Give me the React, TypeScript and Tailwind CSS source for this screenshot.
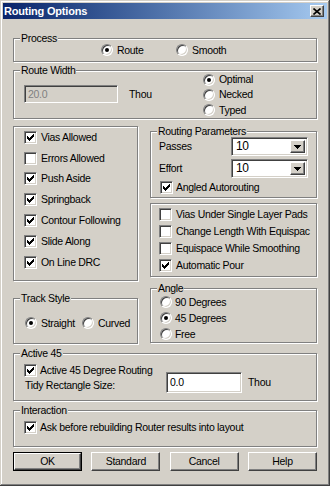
import React from "react";

const sunken =
  "border border-t-[#808080] border-l-[#808080] border-b-white border-r-white shadow-[inset_1px_1px_0_#404040,inset_-1px_-1px_0_#d4d0c8]";
const raised =
  "border border-t-white border-l-white border-b-[#404040] border-r-[#404040] shadow-[inset_-1px_-1px_0_#808080,inset_1px_1px_0_#d4d0c8]";

function Group({
  label,
  className,
  children,
}: {
  label?: string;
  className: string;
  children?: React.ReactNode;
}) {
  return (
    <div
      className={
        "relative border border-[#808080] shadow-[1px_1px_0_#fff,inset_1px_1px_0_#fff] " +
        className
      }
    >
      {label && (
        <span className="absolute left-[6px] top-[-7px] bg-[#d4d0c8] px-[1px] leading-[12px] whitespace-nowrap">
          {label}
        </span>
      )}
      {children}
    </div>
  );
}

function Check({ on }: { on?: boolean }) {
  return (
    <div className={"w-[13px] h-[13px] bg-white shrink-0 flex items-center justify-center " + sunken}>
      {on && (
        <svg width="7" height="7" viewBox="0 0 7 7" shapeRendering="crispEdges">
          <rect x="6" y="0" width="1" height="1" fill="#000" />
          <rect x="5" y="1" width="2" height="1" fill="#000" />
          <rect x="0" y="2" width="1" height="1" fill="#000" />
          <rect x="4" y="2" width="3" height="1" fill="#000" />
          <rect x="0" y="3" width="2" height="1" fill="#000" />
          <rect x="3" y="3" width="3" height="1" fill="#000" />
          <rect x="0" y="4" width="5" height="1" fill="#000" />
          <rect x="1" y="5" width="3" height="1" fill="#000" />
          <rect x="2" y="6" width="1" height="1" fill="#000" />
        </svg>
      )}
    </div>
  );
}

function Radio({ on }: { on?: boolean }) {
  return (
    <div className="w-[12px] h-[12px] rounded-full bg-white shrink-0 flex items-center justify-center border border-t-[#808080] border-l-[#808080] border-b-white border-r-white shadow-[inset_1px_1px_0_#404040,inset_-1px_-1px_0_#d4d0c8]">
      {on && <div className="w-[4px] h-[4px] rounded-full bg-black" />}
    </div>
  );
}

function CheckRow({ on, label, gap }: { on?: boolean; label: string; gap: string }) {
  return (
    <div className={"flex items-center whitespace-nowrap " + gap}>
      <Check on={on} />
      <span>{label}</span>
    </div>
  );
}

function RadioRow({ on, label }: { on?: boolean; label: string }) {
  return (
    <div className="flex items-center gap-[4px] whitespace-nowrap">
      <Radio on={on} />
      <span>{label}</span>
    </div>
  );
}

function Combo({ value }: { value: string }) {
  return (
    <div className={"w-[77px] h-[19px] bg-white flex items-stretch p-[2px] " + sunken}>
      <div className="flex-1 flex items-center pl-[2px] text-[12px]">{value}</div>
      <div className={"w-[15px] bg-[#d4d0c8] flex items-center justify-center " + raised}>
        <svg width="7" height="4" viewBox="0 0 7 4" shapeRendering="crispEdges">
          <path d="M0 0H7L3.5 4Z" fill="#000" />
        </svg>
      </div>
    </div>
  );
}

function Button({ label, def }: { label: string; def?: boolean }) {
  if (def) {
    return (
      <div className="w-[69px] h-[19px] border border-black flex">
        <div className={"flex-1 flex items-center justify-center bg-[#d4d0c8] " + raised}>{label}</div>
      </div>
    );
  }
  return (
    <div className={"w-[69px] h-[19px] flex items-center justify-center bg-[#d4d0c8] " + raised}>
      {label}
    </div>
  );
}

export default function App() {
  return (
    <div
      className="w-[330px] h-[486px] bg-[#d4d0c8] p-[3px] flex flex-col text-black text-[10.5px] tracking-[-0.3px] leading-[13px] shadow-[inset_-1px_-1px_0_#404040,inset_1px_1px_0_#d4d0c8,inset_-2px_-2px_0_#808080,inset_2px_2px_0_#fff]"
      style={{ fontFamily: '"Liberation Sans", Arial, sans-serif' }}
    >
      {/* Title bar */}
      <div className="h-[16px] shrink-0 flex items-center justify-between bg-gradient-to-r from-[#0a246a] to-[#a6caf0]">
        <span className="pl-[1px] text-white font-bold text-[11px] tracking-[-0.2px]">Routing Options</span>
        <div className={"w-[14px] h-[12px] mr-[3px] bg-[#d4d0c8] flex items-center justify-center " + raised}>
          <svg width="8" height="7" viewBox="0 0 8 7">
            <path d="M0.5 0.5L7.5 6.5M7.5 0.5L0.5 6.5" stroke="#000" strokeWidth="1.6" />
          </svg>
        </div>
      </div>

      <div className="flex flex-col px-[10px]">
        {/* Process */}
        <Group label="Process" className="mt-[19px] h-[24px] flex items-center pl-[87px]">
          <div className="w-[75px]">
            <RadioRow on label="Route" />
          </div>
          <RadioRow label="Smooth" />
        </Group>

        {/* Route Width */}
        <Group label="Route Width" className="mt-[8px] h-[49px] flex pl-[10px]">
          <div className="w-[179px] flex items-start pt-[14px]">
            <div className={"w-[94px] h-[18px] bg-[#d4d0c8] text-[#808080] flex items-center pl-[3px] " + sunken}>
              20.0
            </div>
            <span className="ml-[11px] mt-[3px]">Thou</span>
          </div>
          <div className="flex flex-col pt-[1px]">
            <div className="h-[16px] flex items-center">
              <RadioRow on label="Optimal" />
            </div>
            <div className="h-[16px] flex items-center">
              <RadioRow label="Necked" />
            </div>
            <div className="h-[16px] flex items-center">
              <RadioRow label="Typed" />
            </div>
          </div>
        </Group>

        {/* Middle row */}
        <div className="mt-[7px] flex justify-between">
          <Group className="w-[125px] h-[155px] flex flex-col pl-[10px]">
            {[
              ["Vias Allowed", true],
              ["Errors Allowed", false],
              ["Push Aside", true],
              ["Springback", true],
              ["Contour Following", true],
              ["Slide Along", true],
              ["On Line DRC", true],
            ].map(([l, on]) => (
              <div key={l as string} className="h-[20.8px] flex items-center">
                <CheckRow on={on as boolean} label={l as string} gap="gap-[4px]" />
              </div>
            ))}
          </Group>

          <div className="w-[167px] flex flex-col">
            <Group label="Routing Parameters" className="mt-[5px] h-[67px] flex flex-col pl-[8px] pt-[5px]">
              <div className="h-[19px] flex items-center">
                <span className="w-[72px]">Passes</span>
                <Combo value="10" />
              </div>
              <div className="mt-[3px] h-[19px] flex items-center">
                <span className="w-[72px]">Effort</span>
                <Combo value="10" />
              </div>
              <div className="mt-[3px] ml-[1px]">
                <CheckRow on label="Angled Autorouting" gap="gap-[3px]" />
              </div>
            </Group>
            <Group className="mt-[5px] h-[74px] flex flex-col pl-[8px] pt-[2px]">
              {[
                ["Vias Under Single Layer Pads", false],
                ["Change Length With Equispac", false],
                ["Equispace While Smoothing", false],
                ["Automatic Pour", true],
              ].map(([l, on]) => (
                <div key={l as string} className="h-[17px] flex items-center">
                  <CheckRow on={on as boolean} label={l as string} gap="gap-[4px]" />
                </div>
              ))}
            </Group>
          </div>
        </div>

        {/* Track style / Angle */}
        <div className="mt-[7px] flex justify-between items-start">
          <Group label="Track Style" className="mt-[10px] w-[125px] h-[46px] flex pl-[11px] pt-[16px]">
            <div className="h-[16px] flex items-center">
              <div className="w-[57px]">
                <RadioRow on label="Straight" />
              </div>
              <RadioRow label="Curved" />
            </div>
          </Group>
          <Group label="Angle" className="w-[167px] h-[55px] flex flex-col pl-[9px] pt-[5px]">
            <div className="h-[16.5px] flex items-center">
              <div className="flex items-center gap-[3px]">
                <Radio />
                <span>90 Degrees</span>
              </div>
            </div>
            <div className="h-[16.5px] flex items-center">
              <div className="flex items-center gap-[3px]">
                <Radio on />
                <span>45 Degrees</span>
              </div>
            </div>
            <div className="h-[16.5px] flex items-center">
              <div className="flex items-center gap-[3px]">
                <Radio />
                <span>Free</span>
              </div>
            </div>
          </Group>
        </div>

        {/* Active 45 */}
        <Group label="Active 45" className="mt-[9px] h-[48px] flex items-start pl-[10px]">
          <div className="w-[142px] flex flex-col pt-[10px] gap-[2px]">
            <CheckRow on label="Active 45 Degree Routing" gap="gap-[3px]" />
            <span className="ml-[1px] h-[13px] flex items-center whitespace-nowrap">Tidy Rectangle Size:</span>
          </div>
          <div className="mt-[18px] h-[21px] flex items-center">
            <div className={"w-[76px] h-[21px] bg-white flex items-center pl-[3px] " + sunken}>0.0</div>
            <span className="ml-[6px]">Thou</span>
          </div>
        </Group>

        {/* Interaction */}
        <Group label="Interaction" className="mt-[9px] h-[37px] flex items-start pl-[10px] pt-[10px]">
          <CheckRow on label="Ask before rebuilding Router results into layout" gap="gap-[3px]" />
        </Group>

        {/* Buttons */}
        <div className="mt-[5px] flex justify-between">
          <Button label="OK" def />
          <Button label="Standard" />
          <Button label="Cancel" />
          <Button label="Help" />
        </div>
      </div>
    </div>
  );
}
